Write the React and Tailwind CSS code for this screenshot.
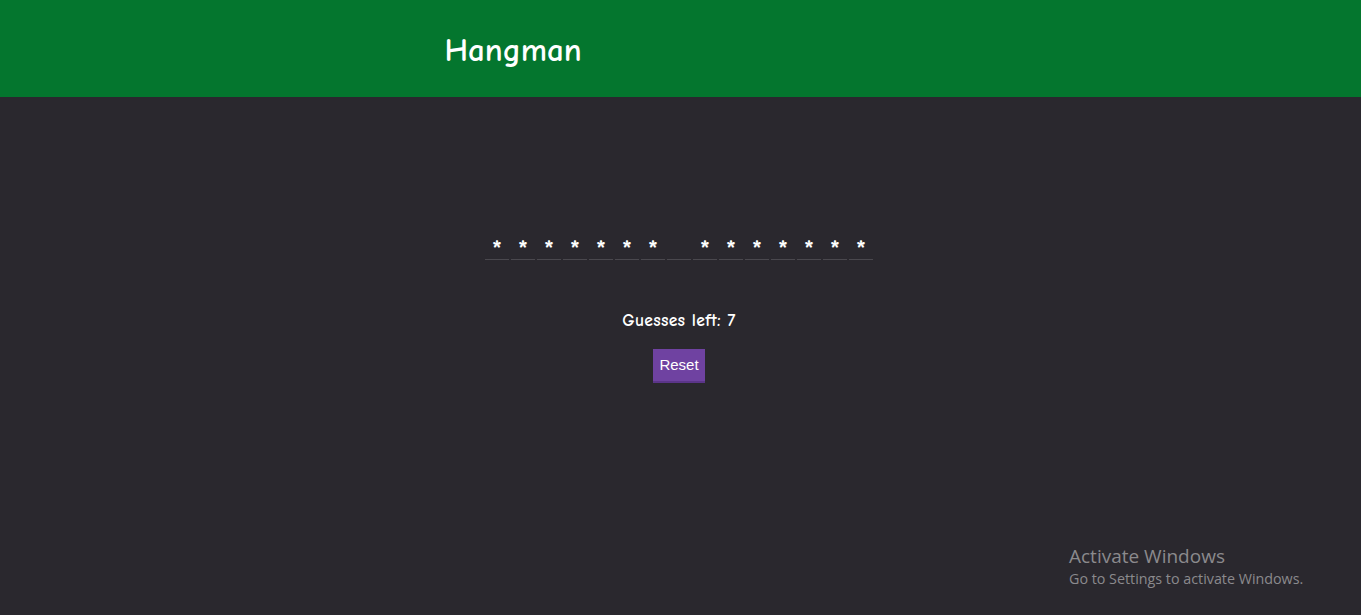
export default function App() {
  const word = "*******_*******".split("");
  const font = { fontFamily: '"Comic Sans MS", "Comic Neue", Lato, "DejaVu Sans", sans-serif' };
  return (
    <div className="relative min-h-[615px] w-full bg-[#2a282e] text-white" style={font}>
      <header className="h-[97px] bg-[#04762e] flex items-center">
        <div className="mx-auto w-[472px]">
          <h1 className="text-[33px] font-bold leading-none mt-[3px]">Hangman</h1>
        </div>
      </header>
      <main className="flex flex-col items-center pr-[3px]">
        <div className="mt-[135px] flex gap-[2px]">
          {word.map((c, i) => (
            <div key={i} className="w-[24px] h-[28px] border-b border-[#4a484e] flex items-start justify-center">
              <span className="text-[26px] font-bold leading-[36px] h-[28px]">{c === "_" ? "" : "*"}</span>
            </div>
          ))}
        </div>
        <p className="mt-[47px] text-[17.5px] font-bold tracking-[0.3px]">Guesses left: 7</p>
        <button
          className="mt-[16px] h-[34px] w-[52px] bg-[#6f42a1] border-b-[2px] border-[#5b3589] text-[15px] text-white"
          style={{ fontFamily: '"Liberation Sans", Arial, sans-serif' }}
        >
          Reset
        </button>
      </main>
      <div
        className="absolute left-[1069px] top-[543px] text-[#8b8a8d]"
        style={{ fontFamily: '"Open Sans", "Noto Sans", sans-serif' }}
      >
        <div className="text-[19px] leading-[26px]">Activate Windows</div>
        <div className="text-[14.3px] leading-[20px]">Go to Settings to activate Windows.</div>
      </div>
    </div>
  );
}
